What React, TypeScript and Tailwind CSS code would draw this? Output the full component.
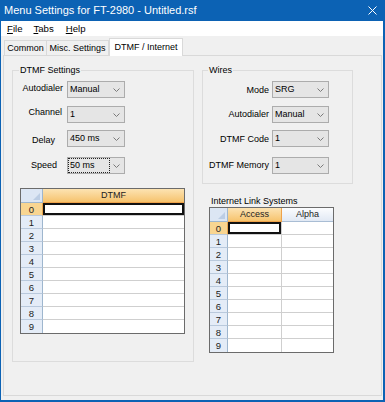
import React from 'react'

type Col = { name: string; w: string; active?: boolean }

function Chevron() {
  return (
    <svg width="7" height="4" viewBox="0 0 7 4" className="mr-[4px] shrink-0">
      <polyline points="0.5,0.5 3.5,3.5 6.5,0.5" fill="none" stroke="#7a7a7a" strokeWidth="1" />
    </svg>
  )
}

function Combo({ value, w, focused }: { value: string; w: string; focused?: boolean }) {
  return (
    <div className={`${w} h-[17px] border border-[#acacac] bg-[#e5e5e5] flex items-center justify-between`}>
      {focused ? (
        <div className="w-[42px] h-[15px] border border-dotted border-[#222] flex items-center pl-[1px] leading-[11px]">
          {value}
        </div>
      ) : (
        <span className="pl-[2px] leading-[11px]">{value}</span>
      )}
      <Chevron />
    </div>
  )
}

function Grid({ head, cols }: { head: string; cols: Col[] }) {
  const rows = [0, 1, 2, 3, 4, 5, 6, 7, 8, 9]
  return (
    <div className="border border-[#6b6b6b] bg-white flex flex-col">
      <div className="flex h-[14px]">
        <div className={`${head} h-full relative border-r border-b border-[#9eb6ce] bg-[#dce6f4]`}>
          <svg width="8" height="8" viewBox="0 0 8 8" className="absolute right-[1px] bottom-[1px]">
            <polygon points="7,0 7,7 0,7" fill="#bccde4" />
          </svg>
        </div>
        {cols.map((c) => (
          <div
            key={c.name}
            className={`${c.w} h-full border-r border-b last:border-r-0 flex items-center justify-center leading-[11px] text-[#222] ${
              c.active
                ? 'bg-linear-to-b from-[#fce3b2] to-[#f6c36c] border-[#eea24a]'
                : 'bg-linear-to-b from-[#fbfcfe] to-[#e1e9f4] border-[#a9bdd4]'
            }`}
          >
            {c.name}
          </div>
        ))}
      </div>
      {rows.map((r) => (
        <div key={r} className="flex h-[13px]">
          <div
            className={`${head} h-full border-r flex items-center justify-center leading-[11px] text-[9.5px] text-[#222] ${
              r === 0 ? 'bg-[#f8d591] border-[#e9a54f]' : 'bg-[#e4ecf7] border-[#9eb6ce]'
            } ${r === 9 ? '' : 'border-b border-b-[#b9c9dc]'}`}
          >
            {r}
          </div>
          {cols.map((c, ci) => (
            <div
              key={c.name}
              className={`${c.w} h-full border-r border-[#cfcfcf] last:border-r-0 ${r === 9 ? '' : 'border-b'}`}
            >
              {r === 0 && ci === 0 && <div className="w-full h-full border-2 border-[#111]" />}
            </div>
          ))}
        </div>
      ))}
    </div>
  )
}

const dtmfRows = [
  { label: 'Autodialer', value: 'Manual', mt: '', pr: 'pr-[4px]', pt: 'pt-[2px]' },
  { label: 'Channel', value: '1', mt: 'mt-[8px]', pr: 'pr-[5px]', pt: 'pt-[1px]' },
  { label: 'Delay', value: '450 ms', mt: 'mt-[7px]', pr: 'pr-[12px]', pt: 'pt-[5px]' },
  { label: 'Speed', value: '50 ms', mt: 'mt-[10px]', pr: 'pr-[10px]', pt: 'pt-[3px]', focused: true },
]

const wiresRows = [
  { label: 'Mode', value: 'SRG', mt: '', pt: 'pt-[4px]' },
  { label: 'Autodialer', value: 'Manual', mt: 'mt-[8px]', pt: 'pt-[3px]' },
  { label: 'DTMF Code', value: '1', mt: 'mt-[7px]', pt: 'pt-[4px]' },
  { label: 'DTMF Memory', value: '1', mt: 'mt-[10px]', pt: 'pt-[3px]' },
]

export default function App() {
  return (
    <div className="w-[385px] h-[402px] flex flex-col bg-[#f0f0f0] font-['Liberation_Sans',Arial,sans-serif] text-black overflow-hidden">
      {/* title bar */}
      <div className="h-[21px] shrink-0 bg-[#0c62b4] flex items-center pl-[4px] pr-[8px] text-white text-[11px]">
        <span className="flex-1">Menu Settings for FT-2980 - Untitled.rsf</span>
        <svg width="9" height="9" viewBox="0 0 9 9">
          <path d="M0.5 0.5 L8.5 8.5 M8.5 0.5 L0.5 8.5" stroke="white" strokeWidth="1" />
        </svg>
      </div>

      <div className="flex-1 flex flex-col border-l border-r-2 border-b-2 border-[#0c62b4]">
        {/* menu */}
        <div className="h-[15px] shrink-0 bg-white flex items-center text-[9.6px] leading-[12px]">
          <span className="ml-[6px]"><span className="underline">F</span>ile</span>
          <span className="ml-[11px]"><span className="underline">T</span>abs</span>
          <span className="ml-[12px]"><span className="underline">H</span>elp</span>
        </div>

        <div className="flex-1 flex flex-col pl-[2px] pr-[1px] pb-[4px] text-[9px]">
          {/* tabs */}
          <div className="h-[19px] shrink-0 flex items-end">
            <div className="ml-[1px] w-[43px] h-[15px] border border-b-0 border-[#d9d9d9] flex items-center justify-center leading-[11px]">
              Common
            </div>
            <div className="w-[62px] h-[15px] border border-l-0 border-b-0 border-[#d9d9d9] flex items-center justify-center leading-[11px]">
              Misc. Settings
            </div>
            <div className="relative z-10 -mb-[1px] w-[74px] h-[18px] border border-b-0 border-[#d9d9d9] bg-white flex items-center justify-center leading-[11px]">
              DTMF / Internet
            </div>
          </div>

          {/* tab page */}
          <div className="h-[341px] w-[379px] border border-[#d9d9d9] bg-[#f0f0f0] flex items-start pl-[8px] pt-[14px]">
            {/* DTMF Settings */}
            <div className="relative w-[182px] h-[292px] border border-[#dcdcdc] pt-[10px] flex flex-col">
              <span className="absolute -top-[6px] left-[6px] px-[1px] bg-[#f0f0f0] leading-[11px]">DTMF Settings</span>
              {dtmfRows.map((r) => (
                <div key={r.label} className={`flex h-[17px] ${r.mt}`}>
                  <div className={`w-[54px] text-right leading-[11px] ${r.pr} ${r.pt}`}>{r.label}</div>
                  <Combo value={r.value} w="w-[58px]" focused={r.focused} />
                </div>
              ))}
              <div className="mt-[14px] ml-[7px] w-[165px]">
                <Grid head="w-[22px]" cols={[{ name: 'DTMF', w: 'flex-1', active: true }]} />
              </div>
            </div>

            {/* right column */}
            <div className="ml-[8px] flex flex-col">
              <div className="relative w-[151px] h-[114px] border border-[#dcdcdc] pt-[10px] flex flex-col">
                <span className="absolute -top-[6px] left-[5px] px-[1px] bg-[#f0f0f0] leading-[11px]">Wires</span>
                {wiresRows.map((r) => (
                  <div key={r.label} className={`flex h-[17px] ${r.mt}`}>
                    <div className={`w-[69px] text-right leading-[11px] pr-[3px] ${r.pt}`}>{r.label}</div>
                    <Combo value={r.value} w="w-[57px]" />
                  </div>
                ))}
              </div>
              <div className="mt-[12px] ml-[9px] leading-[11px]">Internet Link Systems</div>
              <div className="ml-[7px] w-[125px]">
                <Grid
                  head="w-[18px]"
                  cols={[
                    { name: 'Access', w: 'w-[54px]', active: true },
                    { name: 'Alpha', w: 'flex-1' },
                  ]}
                />
              </div>
            </div>
          </div>
        </div>
      </div>
    </div>
  )
}
